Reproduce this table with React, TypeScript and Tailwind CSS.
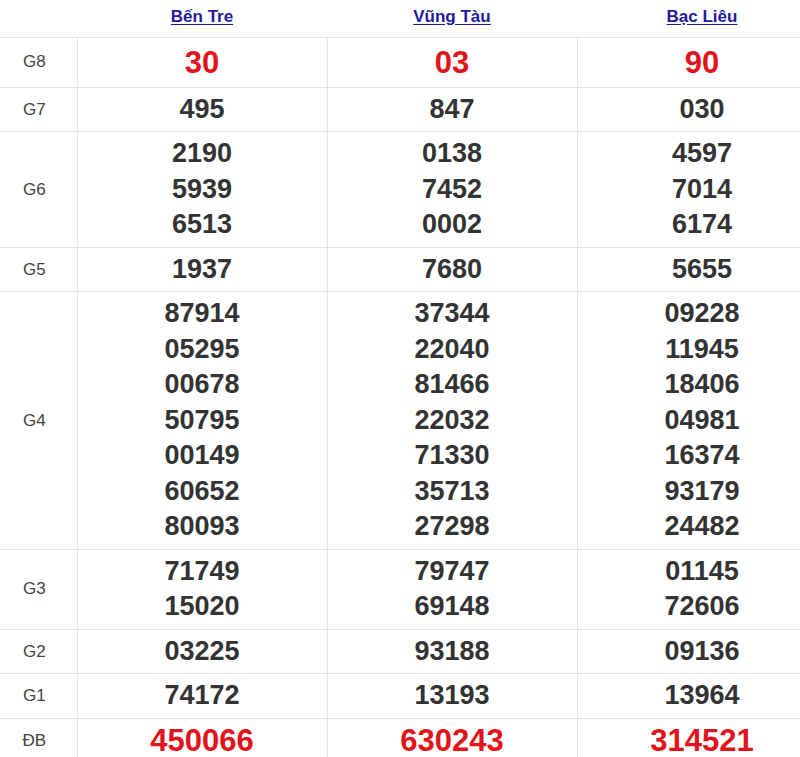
import React from "react";

type Row = {
  label: string;
  values: string[][];
  kind?: "g8" | "db";
};

const provinces = ["Bến Tre", "Vũng Tàu", "Bạc Liêu"];

const rows: Row[] = [
  { label: "G8", values: [["30"], ["03"], ["90"]], kind: "g8" },
  { label: "G7", values: [["495"], ["847"], ["030"]] },
  {
    label: "G6",
    values: [
      ["2190", "5939", "6513"],
      ["0138", "7452", "0002"],
      ["4597", "7014", "6174"],
    ],
  },
  { label: "G5", values: [["1937"], ["7680"], ["5655"]] },
  {
    label: "G4",
    values: [
      ["87914", "05295", "00678", "50795", "00149", "60652", "80093"],
      ["37344", "22040", "81466", "22032", "71330", "35713", "27298"],
      ["09228", "11945", "18406", "04981", "16374", "93179", "24482"],
    ],
  },
  {
    label: "G3",
    values: [
      ["71749", "15020"],
      ["79747", "69148"],
      ["01145", "72606"],
    ],
  },
  { label: "G2", values: [["03225"], ["93188"], ["09136"]] },
  { label: "G1", values: [["74172"], ["13193"], ["13964"]] },
  { label: "ĐB", values: [["450066"], ["630243"], ["314521"]], kind: "db" },
];

const numberClass = (kind?: Row["kind"]) => {
  if (kind === "g8") return "text-[31px] leading-[41px] text-[#e3131b]";
  if (kind === "db") return "text-[31px] leading-[36px] text-[#e3131b]";
  return "text-[27px] leading-[35.5px] text-[#333333]";
};

export default function App() {
  return (
    <div className="w-[800px] h-[757px] overflow-hidden bg-white [font-family:'Liberation_Sans',Arial,sans-serif]">
      <table className="w-[827px] table-fixed border-collapse">
        <colgroup>
          <col className="w-[77px]" />
          <col className="w-[250px]" />
          <col className="w-[250px]" />
          <col className="w-[250px]" />
        </colgroup>
        <thead>
          <tr className="h-[37px] border-b border-[#e4e4e4]">
            <th />
            {provinces.map((p) => (
              <th key={p} className="text-center align-middle pb-[3px]">
                <a
                  href="#"
                  className="text-[17px] font-bold text-[#1f1a9c] underline underline-offset-2"
                >
                  {p}
                </a>
              </th>
            ))}
          </tr>
        </thead>
        <tbody>
          {rows.map((row) => (
            <tr key={row.label} className="border-b border-[#e4e4e4]">
              <td className="border-r border-[#e4e4e4] pr-[8px] text-center align-middle text-[17px] text-[#444444]">
                {row.label}
              </td>
              {row.values.map((col, i) => (
                <td
                  key={i}
                  className="border-r border-[#e4e4e4] py-[4px] text-center align-middle font-bold"
                >
                  {col.map((n, j) => (
                    <div key={j} className={numberClass(row.kind)}>
                      {n}
                    </div>
                  ))}
                </td>
              ))}
            </tr>
          ))}
        </tbody>
      </table>
    </div>
  );
}
